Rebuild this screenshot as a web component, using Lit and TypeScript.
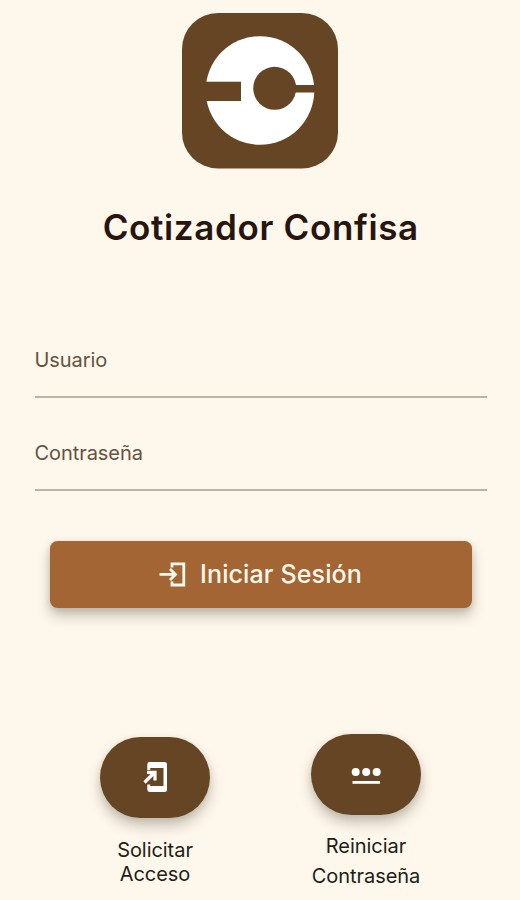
import { LitElement, html, css, svg } from "lit";
import { customElement, property } from "lit/decorators.js";

@customElement("login-field")
class LoginField extends LitElement {
  @property() label = "";

  static styles = css`
    :host {
      display: block;
      height: 58px;
      box-sizing: border-box;
      border-bottom: 2px solid #bab4a5;
    }
    .label {
      display: inline-block;
      font-size: 20px;
      line-height: 40px;
      letter-spacing: -0.06px;
      color: #65533f;
    }
  `;

  render() {
    return html`<span class="label">${this.label}</span>`;
  }
}

@customElement("pill-action")
class PillAction extends LitElement {
  static styles = css`
    :host {
      display: flex;
      flex-direction: column;
      align-items: center;
      width: 111px;
    }
    .pill {
      display: flex;
      align-items: center;
      justify-content: center;
      width: 110.5px;
      height: 81px;
      border: 0;
      padding: 0;
      border-radius: 41px;
      background: #664524;
      box-shadow: 0 8px 13px rgba(60, 55, 40, 0.27), 0 2px 6px rgba(60, 55, 40, 0.1);
    }
  `;

  render() {
    return html`
      <button class="pill"><slot name="icon"></slot></button>
      <slot></slot>
    `;
  }
}

const logo = svg`
  <rect width="156" height="155.5" rx="36" fill="#664524"/>
  <circle cx="78" cy="77.5" r="54.3" fill="#fff"/>
  <rect x="20" y="68.700" width="39" height="19.300" fill="#664524"/>
  <circle cx="92.700" cy="75.300" r="21.500" fill="#664524"/>
  <rect x="110" y="72" width="26" height="7.500" fill="#664524"/>`;

@customElement("app-root")
class AppRoot extends LitElement {
  static styles = css`
    :host {
      display: flex;
      flex-direction: column;
      height: 900px;
      box-sizing: border-box;
      padding-top: 13px;
      overflow: hidden;
      background: #fef7eb;
      font-family: Inter, sans-serif;
    }
    .logo {
      display: block;
      flex: none;
      width: 156px;
      height: 156px;
      margin: 0 auto;
    }
    .title {
      margin: 33px 0 0 1.5px;
      text-align: center;
      white-space: nowrap;
      font-size: 35px;
      line-height: 50px;
      font-weight: 600;
      letter-spacing: 0.65px;
      color: #28150d;
    }
    .form {
      display: flex;
      flex-direction: column;
      gap: 35px;
      margin: 88px 33px 0 34.5px;
    }
    .submit {
      display: flex;
      align-items: center;
      justify-content: center;
      gap: 14px;
      flex: none;
      height: 67px;
      margin: 49.5px 48.5px 0 49.5px;
      padding: 0;
      border: 0;
      border-radius: 7.5px;
      background: #a36533;
      color: #fff8ec;
      font: 500 25px/30px Inter, sans-serif;
      letter-spacing: 0.13px;
      white-space: nowrap;
      box-shadow: 0 8px 13px rgba(60, 60, 45, 0.28), 0 2px 6px rgba(60, 60, 45, 0.15);
    }
    .enter {
      width: 27px;
      height: 25px;
    }
    .actions {
      display: flex;
      justify-content: space-between;
      margin: 126px 98.5px 0 99.5px;
    }
    .request {
      margin-top: 3px;
    }
    .caption {
      margin-top: 20px;
      text-align: center;
      white-space: nowrap;
      font-size: 20px;
      line-height: 24px;
      letter-spacing: -0.05px;
      color: #211d18;
    }
    .loose {
      margin-top: 16.5px;
      line-height: 30px;
    }
    .phone {
      width: 28px;
      height: 34px;
      margin-right: 1px;
    }
    .dots {
      width: 32px;
      height: 20px;
      margin-top: 3px;
    }
  `;

  render() {
    return html`
      <svg class="logo" viewBox="0 0 156 156">${logo}</svg>
      <h1 class="title">Cotizador Confisa</h1>
      <div class="form">
        <login-field label="Usuario"></login-field>
        <login-field label="Contraseña"></login-field>
      </div>
      <button class="submit">
        <svg class="enter" viewBox="0 0 27 25" fill="none" stroke="#fff8ec" stroke-width="2.8">
          <path d="M13 5.5V1.9H24.8V23H13V19.4"/>
          <path d="M0.5 12.4H16M11 6.9L16.5 12.4L11 17.9"/>
        </svg>
        <span>Iniciar Sesión</span>
      </button>
      <div class="actions">
        <pill-action class="request">
          <svg slot="icon" class="phone" viewBox="0 0 28 34">
            <path fill="#fff" fill-rule="evenodd" d="M8.3 2H23.500Q26 2 26 4.500V29.500Q26 32 23.500 32H9Q6.300 32 6.300 29V24.500H9.200V26H22.500V8H9.200V10H6.300V4.500Q6.300 2 8.300 2Z"/>
            <path fill="none" stroke="#fff" stroke-width="3.200" d="M3.500 22.500L13.500 12.500M6 12.300H14V20.500"/>
          </svg>
          <div class="caption">Solicitar<br />Acceso</div>
        </pill-action>
        <pill-action>
          <svg slot="icon" class="dots" viewBox="0 0 32 20" fill="#fff">
            <circle cx="5.700" cy="6" r="4"/>
            <circle cx="16.200" cy="6" r="4"/>
            <circle cx="26.700" cy="6" r="4"/>
            <rect x="2.500" y="15" width="27.500" height="2.800"/>
          </svg>
          <div class="caption loose">Reiniciar<br />Contraseña</div>
        </pill-action>
      </div>
    `;
  }
}
